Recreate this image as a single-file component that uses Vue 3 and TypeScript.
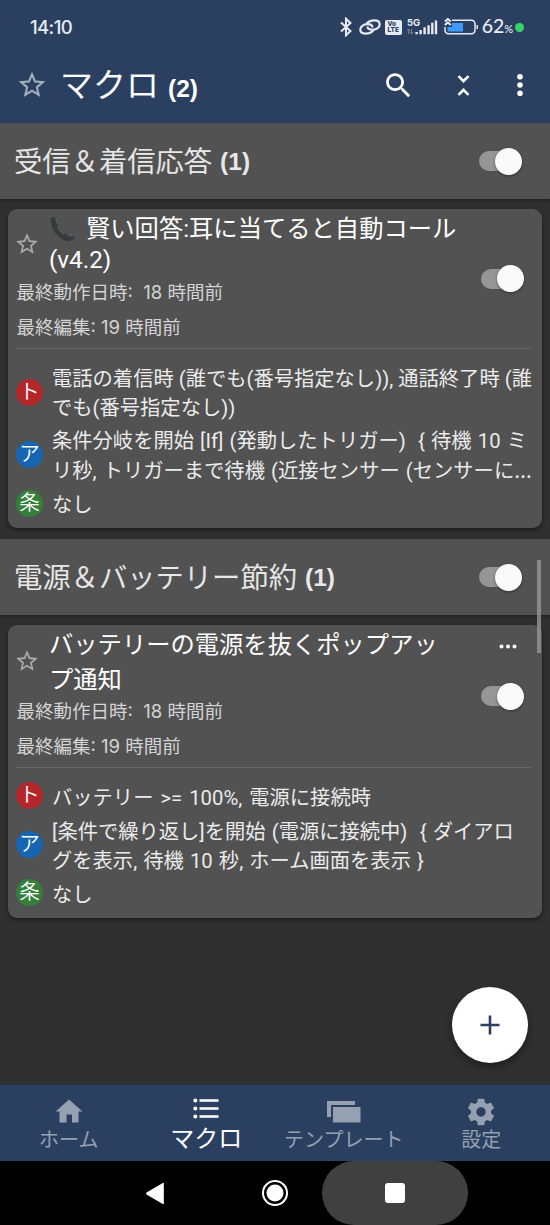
<script setup lang="ts">
interface Row {
  kind: 'trigger' | 'action' | 'condition'
  label: string
  lines: string[]
  clipped?: boolean
}

interface Macro {
  id: string
  emoji: boolean
  title: string[]
  more: boolean
  rows: Row[]
}

interface Category {
  name: string
  count: number
  macro: Macro
}

const categories: Category[] = [
  {
    name: '受信＆着信応答',
    count: 1,
    macro: {
      id: 'call',
      emoji: true,
      title: ['賢い回答:耳に当てると自動コール', '(v4.2)'],
      more: false,
      rows: [
        { kind: 'trigger', label: 'ト', lines: ['電話の着信時 (誰でも(番号指定なし)), 通話終了時 (誰', 'でも(番号指定なし))'] },
        { kind: 'action', label: 'ア', lines: ['条件分岐を開始 [If] (発動したトリガー)  { 待機 10 ミ', 'リ秒, トリガーまで待機 (近接センサー (センサーに'], clipped: true },
        { kind: 'condition', label: '条', lines: ['なし'] },
      ],
    },
  },
  {
    name: '電源＆バッテリー節約',
    count: 1,
    macro: {
      id: 'unplug',
      emoji: false,
      title: ['バッテリーの電源を抜くポップアッ', 'プ通知'],
      more: true,
      rows: [
        { kind: 'trigger', label: 'ト', lines: ['バッテリー >= 100%, 電源に接続時'] },
        { kind: 'action', label: 'ア', lines: ['[条件で繰り返し]を開始 (電源に接続中)  { ダイアロ', 'グを表示, 待機 10 秒, ホーム画面を表示 }'] },
        { kind: 'condition', label: '条', lines: ['なし'] },
      ],
    },
  },
]

const starPath =
  'M22 9.24l-7.19-.62L12 2 9.19 8.63 2 9.24l5.46 4.73L5.82 21 12 17.27 18.18 21l-1.63-7.03L22 9.24zM12 15.4l-3.76 2.27 1-4.28-3.32-2.88 4.38-.38L12 6.1l1.71 4.04 4.38.38-3.32 2.88 1 4.28L12 15.4z'
</script>

<template>
  <div class="screen">
    <header class="appbar">
      <div class="status">
        <span class="clock">14:10</span>
        <div class="indicators">
          <svg class="bt" width="14" height="20" viewBox="0 0 14 20"><path d="M2 5.5L11.5 14 7 18.3V1.7L11.5 6 2 14.5" /></svg>
          <svg class="link" width="22" height="18" viewBox="0 0 22 18">
            <path d="M14.5 12.2C12.8 14.6 9.7 15.6 6.5 15.6 3.3 15.6 1.3 14 1.3 11.5 1.3 8.6 4.4 6.2 8.2 6.2c3.2 0 5.3 1.3 5.3 3.2" />
            <path d="M7.5 5.8C9.200 3.400 12.300 2.400 15.500 2.400c3.200 0 5.200 1.600 5.200 4.100 0 2.900-3.100 5.300-6.900 5.300-3.200 0-5.300-1.300-5.300-3.200" />
          </svg>
          <span class="volte"><b>Vo</b><b>LTE</b></span>
          <svg class="signal" width="31" height="20" viewBox="0 0 31 20">
            <text x="0" y="9">5G</text>
            <path class="dim" d="M1.500 17v-5M0 14l1.500-2L3 14M4.500 12v5M3 15l1.500 2L6 15" />
            <path class="bars" d="M9.600 17.200v-2.200M13.600 17.200v-4.200M17.600 17.200v-7M21.600 17.200v-9M25.300 17.200v-11.500M29 17.200V3.500" />
          </svg>
          <svg class="battery" width="35" height="20" viewBox="0 0 35 20">
            <path class="shell" d="M8 3.200h19.500a3.500 3.500 0 0 1 3.500 3.500v6.600a3.500 3.500 0 0 1-3.500 3.500H4.500A3.500 3.500 0 0 1 1 13.300V10" />
            <path class="charge" d="M3.500 10H8V6h11v8.500H5a1.500 1.500 0 0 1-1.500-1.500z" />
            <path class="chev" d="M.8 4.500L3.800 2l3 2.500M.8 8L3.800 5.500l3 2.500" />
            <path class="tip" d="M33.200 8v4" />
          </svg>
          <span class="percent">62<small>%</small></span>
          <i class="dot"></i>
        </div>
      </div>
      <div class="toolbar">
        <svg class="star" width="32" height="32" viewBox="0 0 24 24"><path :d="starPath" /></svg>
        <h1>マクロ</h1>
        <span class="count">(2)</span>
        <div class="tools">
          <svg width="33" height="33" viewBox="0 0 24 24"><path d="M15.5 14h-.79l-.28-.27C15.410 12.590 16 11.110 16 9.500 16 5.910 13.090 3 9.500 3S3 5.910 3 9.500 5.910 16 9.500 16c1.610 0 3.090-.59 4.230-1.570l.27.28v.79l5 4.990L20.490 19l-4.990-5zm-6 0C7.010 14 5 11.990 5 9.500S7.010 5 9.500 5 14 7.010 14 9.500 11.990 14 9.500 14z" /></svg>
          <svg class="fold" width="31" height="31" viewBox="0 0 24 24"><path d="M7.410 18.590L8.830 20 12 16.830 15.170 20l1.410-1.410L12 14l-4.590 4.590zM16.590 5.410L15.170 4 12 7.170 8.830 4 7.410 5.410 12 10l4.590-4.590z" /></svg>
          <svg class="dots" width="8" height="24" viewBox="0 0 8 24"><circle cx="4" cy="3.800" r="2.800" /><circle cx="4" cy="12" r="2.800" /><circle cx="4" cy="20.200" r="2.800" /></svg>
        </div>
      </div>
    </header>

    <main>
      <section v-for="cat in categories" :key="cat.name">
        <div class="category">
          <h2>{{ cat.name }}</h2>
          <span class="count">({{ cat.count }})</span>
          <i class="switch"></i>
        </div>
        <article :class="['card', cat.macro.id]">
          <div class="head">
            <svg class="star" width="26" height="26" viewBox="0 0 24 24"><path :d="starPath" /></svg>
            <h3>
              <span v-for="(line, i) in cat.macro.title" :key="line" class="line">
                <svg v-if="cat.macro.emoji && i === 0" class="phone" width="27" height="27" viewBox="0 0 28 28">
                  <path d="M2.500 1.800C5 .3 7.500 1.300 8.300 3.500l1.600 4.300c.4 1.200-.2 2.200-1.800 3.200 1.200 3.600 4 6.600 7.600 8.600 1.300-1.700 2.400-2.200 3.700-1.700l5.600 2.300c2 1 1.400 3.600-1.200 5-4 2-10.500-.2-15.500-5.500C2.800 14 .2 5.500 2.500 1.800z" />
                  <path class="shine" d="M7 2.500l2.300 5.800M18.500 18.500l6 2.500" />
                </svg>{{ line }}</span>
            </h3>
            <div class="side">
              <svg v-if="cat.macro.more" class="more" width="18" height="5" viewBox="0 0 18 5"><circle cx="2.500" cy="2.500" r="2" /><circle cx="9" cy="2.500" r="2" /><circle cx="15.500" cy="2.500" r="2" /></svg>
              <i class="switch"></i>
            </div>
          </div>
          <div class="meta">
            <p>最終動作日時:&nbsp; 18 時間前</p>
            <p class="edited">最終編集: 19 時間前</p>
          </div>
          <ul>
            <li v-for="row in cat.macro.rows" :key="row.kind" :class="row.kind">
              <b class="badge">{{ row.label }}</b>
              <div><span v-for="(line, i) in row.lines" :key="line" class="line">{{ line }}<span v-if="row.clipped && i === row.lines.length - 1" class="ellipsis">…</span></span></div>
            </li>
          </ul>
        </article>
      </section>
      <i class="scrollbar"></i>
      <button class="fab" aria-label="+"><svg width="20" height="20" viewBox="0 0 20 20"><path d="M10 .5v19M.5 10h19" /></svg></button>
    </main>

    <nav class="tabs">
      <a class="tab">
        <svg width="28" height="24" viewBox="0 0 28 24"><path d="M14 .5L27.500 12.500H23.500V23.500H17V15.500H11.500V23.500H4.500V12.500H.5z" /></svg>
        <span>ホーム</span>
      </a>
      <a class="tab active">
        <svg width="26" height="21" viewBox="0 0 26 21"><circle cx="2.300" cy="2.500" r="2" /><circle cx="2.300" cy="10.500" r="2" /><circle cx="2.300" cy="18.500" r="2" /><path d="M6.500 1.200h19v2.600h-19zM6.500 9.200h19v2.600h-19zM6.500 17.200h19v2.600h-19z" /></svg>
        <span>マクロ</span>
      </a>
      <a class="tab">
        <svg width="34" height="22" viewBox="0 0 34 22"><path d="M0 0H28V4H4V16H0zM6 6H33.500V21.500H6z" /></svg>
        <span>テンプレート</span>
      </a>
      <a class="tab">
        <svg width="32" height="32" viewBox="0 0 24 24"><path d="M19.430 12.980c.04-.32.070-.64.070-.98s-.03-.66-.07-.98l2.110-1.650c.19-.15.24-.42.12-.64l-2-3.460c-.12-.22-.39-.3-.61-.22l-2.490 1c-.52-.4-1.080-.73-1.690-.98l-.38-2.650C14.460 2.180 14.250 2 14 2h-4c-.25 0-.46.18-.49.42l-.38 2.650c-.61.25-1.170.59-1.690.98l-2.490-1c-.23-.09-.49 0-.61.22l-2 3.460c-.13.22-.07.49.12.64l2.110 1.650c-.04.32-.07.65-.07.98s.03.66.07.98l-2.110 1.650c-.19.15-.24.42-.12.64l2 3.460c.12.22.39.3.61.22l2.490-1c.52.4 1.080.73 1.690.98l.38 2.650c.03.24.24.42.49.42h4c.25 0 .46-.18.49-.42l.38-2.650c.61-.25 1.170-.59 1.690-.98l2.490 1c.23.09.49 0 .61-.22l2-3.460c.12-.22.070-.49-.12-.64l-2.110-1.650zM12 15.500c-1.930 0-3.500-1.570-3.500-3.500s1.570-3.500 3.500-3.500 3.500 1.570 3.500 3.500-1.570 3.500-3.500 3.500z" /></svg>
        <span>設定</span>
      </a>
    </nav>

    <footer class="system">
      <svg class="back" width="19" height="23" viewBox="0 0 19 23"><path d="M18.800 1.300V21.700Q18.800 22.500 17.800 22L1.500 12.500Q.5 11.500 1.500 10.500L17.800 1Q18.800 .5 18.800 1.300z" /></svg>
      <svg class="home" width="28" height="28" viewBox="0 0 28 28"><circle class="ring" cx="14" cy="14" r="12" /><circle cx="14" cy="14" r="8.500" /></svg>
      <div class="recent"><i></i></div>
    </footer>
  </div>
</template>

<style>
body {
  margin: 0;
  background: #303030;
}
</style>

<style scoped>
* {
  box-sizing: border-box;
}

.screen {
  width: 550px;
  height: 1225px;
  display: flex;
  flex-direction: column;
  overflow: hidden;
  background: #303030;
  color: #fff;
  font-family: Inter, "Noto Sans CJK JP", sans-serif;
}

h1,
h2,
h3,
p,
ul {
  margin: 0;
  padding: 0;
  font-weight: 400;
  list-style: none;
}

svg {
  display: block;
  flex: none;
  fill: currentColor;
}

.appbar {
  height: 123px;
  flex: none;
  background: #2b4060;
}

.status {
  height: 54px;
  padding: 0 26px 0 30px;
  display: flex;
  align-items: center;
  justify-content: space-between;
  color: #e6eaf2;
}

.clock {
  font: 500 18.500px/20px Inter, sans-serif;
  letter-spacing: -0.6px;
}

.indicators {
  display: flex;
  align-items: center;
}

.bt,
.link {
  fill: none;
  stroke: currentColor;
  stroke-width: 2;
}

.bt {
  margin-right: 6px;
}

.link {
  margin-right: 4px;
  stroke-width: 2.200;
}

.volte {
  width: 17px;
  height: 15px;
  padding-top: 1px;
  margin-right: 5px;
  border-radius: 2px;
  background: #e6eaf2;
  color: #2b4060;
  font: 800 6.500px/6.500px Inter, sans-serif;
  text-align: center;
}

.volte b {
  display: block;
  height: 6.500px;
  overflow: hidden;
  font-weight: 800;
}

.volte b:first-child {
  margin-right: 3px;
}

.signal {
  margin-right: 6px;
}

.signal text {
  font: 700 9.500px Inter, sans-serif;
}

.signal path {
  fill: none;
  stroke: currentColor;
  stroke-width: 2.400;
}

.signal .dim {
  stroke: #6f7f98;
  stroke-width: 1;
}

.battery {
  margin-right: 3px;
}

.battery path {
  fill: none;
  stroke: currentColor;
  stroke-width: 1.500;
}

.battery .charge {
  fill: #3d9bff;
  stroke: none;
}

.battery .chev {
  stroke-width: 2;
}

.percent {
  font: 500 19.500px/20px Lato, sans-serif;
  letter-spacing: -0.1px;
}

.percent small {
  font-size: 11px;
  letter-spacing: 0;
}

.dot {
  width: 9px;
  height: 9px;
  margin-left: 2px;
  border-radius: 50%;
  background: #35d467;
}

.toolbar {
  height: 62px;
  padding: 0 26px 0 16px;
  display: flex;
  align-items: center;
}

.star {
  color: #a2adbc;
}

.toolbar h1 {
  margin-left: 12px;
  font-size: 33px;
  line-height: 40px;
  font-weight: 350;
  -webkit-text-stroke: 0.2px currentColor;
}

.count {
  font: 700 24.500px/30px "Liberation Sans", sans-serif;
}

.toolbar .count {
  margin: 7px 0 0 9px;
}

.tools {
  margin-left: auto;
  display: flex;
  align-items: center;
}

.fold {
  margin-left: 33px;
}

.dots {
  margin-left: 37px;
}

main {
  position: relative;
  height: 962px;
  flex: none;
}

section {
  height: 416px;
}

.category {
  height: 76px;
  padding: 0 27px 0 14px;
  display: flex;
  align-items: center;
  background: #525252;
  color: #e8e8e8;
  box-shadow: 0 1px 3px rgba(0, 0, 0, 0.4);
}

.category h2 {
  padding-top: 1px;
  font-size: 28.300px;
  line-height: 40px;
  font-weight: 350;
  -webkit-text-stroke: 0.15px currentColor;
}

.category .count {
  margin: 2px 0 0 8px;
}

.category .switch {
  margin-left: auto;
}

.switch {
  width: 45px;
  height: 28px;
  display: flex;
  align-items: center;
}

.switch::before {
  content: "";
  width: 38px;
  height: 20px;
  flex: none;
  margin-left: 1px;
  border-radius: 10px;
  background: #969696;
}

.switch::after {
  content: "";
  width: 27px;
  height: 27px;
  flex: none;
  margin-left: -22px;
  border-radius: 50%;
  background: #fafafa;
  box-shadow: 0 1px 3px rgba(0, 0, 0, 0.4);
}

.card {
  width: 534px;
  height: 319px;
  margin: 10px 0 0 8px;
  padding: 4px 10px 0 8px;
  border-radius: 9px;
  background: #525252;
  box-shadow: 0 2px 4px rgba(0, 0, 0, 0.45);
}

.unplug {
  height: 293px;
  padding-top: 2px;
}

.head {
  height: 62px;
  display: flex;
}

.unplug .head {
  height: 67px;
}

.head .star {
  margin: 18px 0 0 -2px;
  color: #aaa;
}

.unplug .head .star {
  margin-top: 21px;
}

.head h3 {
  flex: 1;
  margin-left: 9px;
  font-family: Roboto, "Noto Sans CJK JP", sans-serif;
  font-size: 24.300px;
  line-height: 31px;
}

.unplug .head h3 {
  line-height: 35px;
}

.line {
  display: block;
  white-space: pre;
}

.ellipsis {
  font-family: Inter, sans-serif;
}

.phone {
  display: inline-block;
  margin-right: 10px;
  vertical-align: -6px;
  color: #343a3d;
}

.phone .shine {
  fill: none;
  stroke: #5c6468;
  stroke-width: 1.500;
}

.side {
  width: 45px;
  margin-right: 7.500px;
  padding-top: 51.500px;
}

.unplug .side {
  padding-top: 17px;
}

.more {
  margin: 0 0 33px 19.500px;
}

.meta {
  height: 74px;
  margin-right: 1px;
  border-bottom: 1px solid #666;
  color: #d4d4d4;
  font-size: 18.500px;
  line-height: 35px;
  text-indent: 0.5px;
  white-space: nowrap;
}

.card ul {
  padding-top: 16px;
}

.card li {
  display: flex;
  align-items: center;
  margin-bottom: 4px;
  color: #ebebeb;
  font-family: Roboto, "Noto Sans CJK JP", sans-serif;
  font-size: 20.300px;
  line-height: 29px;
  word-spacing: 1.100px;
}

.call .trigger {
  word-spacing: 0;
}

.unplug .trigger {
  word-spacing: 2px;
}

.card .action,
.unplug .trigger {
  margin-bottom: 5px;
}

.badge {
  width: 27px;
  height: 27px;
  flex: none;
  margin-right: 9px;
  border-radius: 50%;
  color: #fff;
  font-size: 20.500px;
  font-weight: 350;
  line-height: 26px;
  text-align: center;
  transform: translateY(-2px);
}

.unplug .badge {
  transform: translateY(-3px);
}

.trigger .badge {
  background: #b3272b;
}

.action .badge {
  background: #1565b3;
}

.condition .badge {
  background: #34803a;
}

.scrollbar {
  position: absolute;
  left: 537px;
  top: 437px;
  width: 4px;
  height: 93px;
  background: rgba(150, 150, 150, 0.8);
}

.fab {
  position: absolute;
  left: 452px;
  top: 864px;
  width: 76px;
  height: 76px;
  padding: 0;
  border: 0;
  border-radius: 50%;
  display: grid;
  place-items: center;
  background: #fff;
  color: #2b4060;
  box-shadow: 0 4px 9px rgba(0, 0, 0, 0.4);
}

.fab path {
  stroke: currentColor;
  stroke-width: 2.600;
}

.tabs {
  height: 76px;
  flex: none;
  display: grid;
  grid-template-columns: repeat(4, 1fr);
  background: #2b4060;
}

.tab {
  height: 76px;
  display: flex;
  flex-direction: column;
  align-items: center;
  justify-content: flex-end;
  padding-bottom: 7px;
  color: #95a0b0;
  font-size: 20px;
  line-height: 28px;
  white-space: nowrap;
}

.tab svg {
  margin-bottom: 3px;
}

.tab.active {
  padding-bottom: 8px;
  color: #fff;
  font-size: 24px;
}

.tab.active svg {
  margin-bottom: 6px;
}

.tab:last-child svg {
  margin-bottom: -2px;
}

.system {
  height: 64px;
  flex: none;
  display: flex;
  align-items: center;
  padding-left: 145px;
  background: #000;
  color: #fff;
}

.home {
  margin-left: 97px;
}

.home .ring {
  fill: none;
  stroke: currentColor;
  stroke-width: 2;
}

.recent {
  width: 146px;
  height: 64px;
  margin-left: 33px;
  border-radius: 32px;
  display: grid;
  place-items: center;
  background: #404040;
}

.recent i {
  width: 20px;
  height: 20px;
  border-radius: 3px;
  background: #fff;
}
</style>
